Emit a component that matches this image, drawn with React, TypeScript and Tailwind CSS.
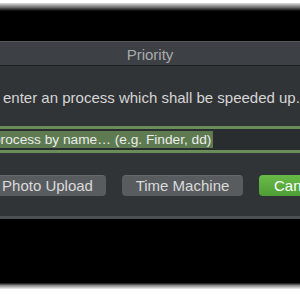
import React from 'react';

const font = { fontFamily: '"Liberation Sans", Arial, sans-serif' };

export default function App() {
  return (
    <div className="w-[300px] h-[300px] overflow-hidden bg-black flex flex-col" style={font}>
      {/* dithered edge at the top */}
      <div className="h-[3px] shrink-0 bg-white" />
      <div className="h-[9px] shrink-0 bg-gradient-to-b from-[#e0e0e0] via-[#6a6a6a] to-black" />
      <div className="h-[29px] shrink-0" />

      {/* Priority window */}
      <div className="shrink-0 border-t border-[#55585b] bg-[#313437]">
        <div className="h-[24px] pt-[2px] bg-[#3d4044] border-b border-[#1d1f21] flex items-center justify-center">
          <span className="text-[15px] leading-[18px] text-[#a9abad]">Priority</span>
        </div>

        <div className="h-[150px] pt-[23px] flex flex-col">
          <p className="pl-[3px] text-[15px] leading-[18px] text-[#d6d6d6] whitespace-nowrap">
            enter an process which shall be speeded up.
          </p>

          <div className="mt-[19px] border-y-[3px] border-[#6a8e59] bg-[#2a2d2f]">
            <div className="h-[21px] flex items-center">
              <span className="-ml-[7px] pr-[2px] bg-[#5d7a51] text-[13.7px] leading-[17px] text-[#ececec] whitespace-nowrap">
                process by name… (e.g. Finder, dd)
              </span>
            </div>
          </div>

          <div className="mt-[22px] -ml-[11px] flex gap-4 whitespace-nowrap">
            <button className="w-[117px] h-[21px] shrink-0 rounded-[4px] bg-[#595c5f] border-t border-[#66696c] text-[15px] leading-[18px] text-[#dadada]">
              Photo Upload
            </button>
            <button className="w-[121px] h-[21px] shrink-0 rounded-[4px] bg-[#595c5f] border-t border-[#66696c] text-[15px] leading-[18px] text-[#dadada]">
              Time Machine
            </button>
            <button className="w-[80px] h-[21px] shrink-0 rounded-[4px] bg-gradient-to-b from-[#68bb48] to-[#4f9e35] text-[15px] leading-[18px] text-white text-left pl-[15px]">
              Cancel
            </button>
          </div>
        </div>

        <div className="h-[3px] bg-[#4e5154]" />
      </div>

      <div className="flex-1" />
      {/* dithered edge at the bottom */}
      <div className="h-[7px] shrink-0 bg-gradient-to-b from-black via-[#8a8a8a] to-[#f0f0f0]" />
      <div className="h-[11px] shrink-0 bg-white" />
    </div>
  );
}
